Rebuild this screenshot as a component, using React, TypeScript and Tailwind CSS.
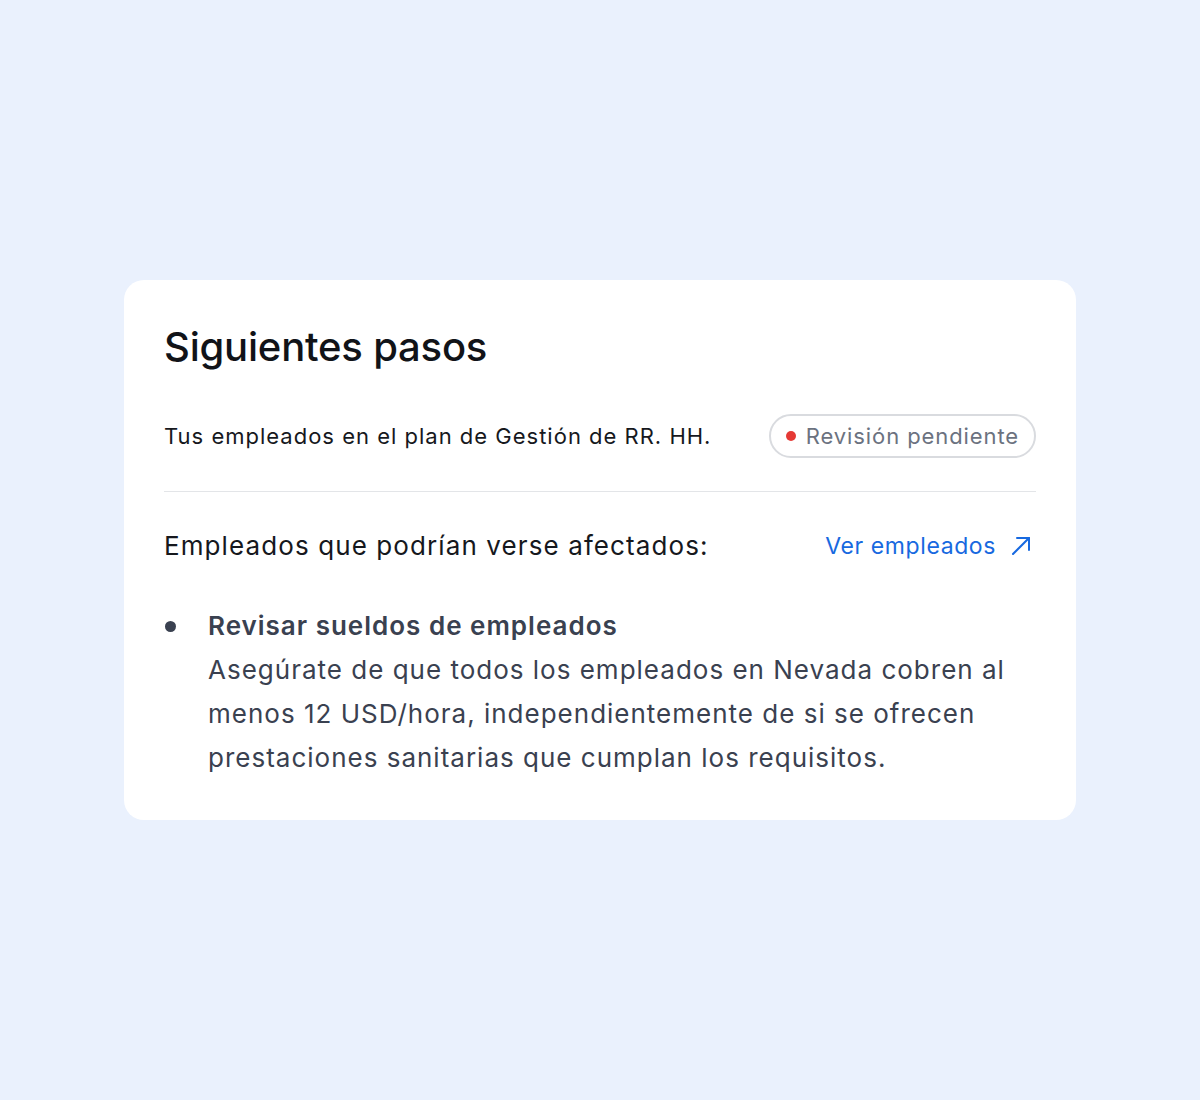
const ArrowOut = () => (
    <svg width="20" height="18" viewBox="0 0 20 18" fill="none" stroke="currentColor" strokeWidth="2" strokeLinecap="round" strokeLinejoin="round">
        <path d="M2 17 L18 1" />
        <path d="M6 1 H18 V13" />
    </svg>
);

const App = () => {
    return (
        <div className="min-h-[1100px] flex items-center justify-center bg-[#eaf1fd] font-['Inter',sans-serif]">
            <div className="w-[952px] rounded-[20px] bg-white px-10 py-10">
                <h2 className="mt-[3px] text-[40px] leading-[48px] font-medium tracking-[-0.005em] text-[#111318]">
                    Siguientes pasos
                </h2>

                {/* Plan + status */}
                <div className="mt-[43px] flex items-center justify-between">
                    <p className="text-[22px] tracking-[1px] text-[#16181d]">
                        Tus empleados en el plan de Gestión de RR. HH.
                    </p>
                    <span className="flex h-[44px] items-center gap-[10px] rounded-full border-2 border-[#d9dbdf] pl-[15px] pr-[15px] text-[22px] tracking-[0.9px] text-[#6b7280]">
                        <span className="h-[10px] w-[10px] rounded-full bg-[#e53935]" />
                        Revisión pendiente
                    </span>
                </div>

                <div className="mt-[33px] h-px bg-[#e3e5e8]" />

                <div className="mt-[38px] flex items-center justify-between">
                    <p className="text-[26px] leading-[32px] tracking-[1.1px] text-[#16181d]">
                        Empleados que podrían verse afectados:
                    </p>
                    <a href="#" className="mr-[5px] flex items-center gap-[15px] text-[23px] leading-[32px] tracking-[0.6px] text-[#1769e0]">
                        Ver empleados
                        <ArrowOut />
                    </a>
                </div>

                <ul className="mt-[42px]">
                    <li className="flex gap-[32px] text-[26px] leading-[44px] tracking-[1px] text-[#3a4150]">
                        <span className="mt-[17px] ml-[1px] h-[11px] w-[11px] shrink-0 rounded-full bg-[#3a4150]" />
                        <div>
                            <p className="font-semibold">Revisar sueldos de empleados</p>
                            <p>
                                Asegúrate de que todos los empleados en Nevada cobren al menos 12 USD/hora,
                                independientemente de si se ofrecen prestaciones sanitarias que cumplan los
                                requisitos.
                            </p>
                        </div>
                    </li>
                </ul>
            </div>
        </div>
    );
};

export default App;
